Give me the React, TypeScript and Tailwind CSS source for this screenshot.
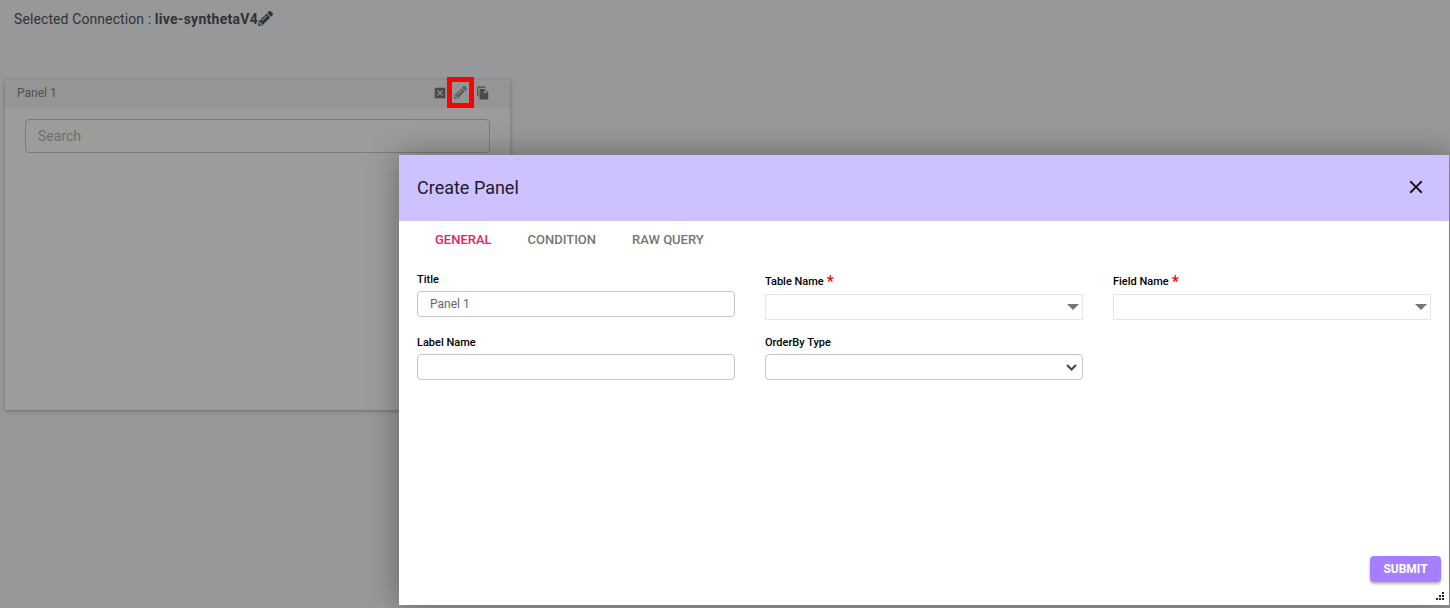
import { MdDisabledByDefault, MdFileCopy, MdClose } from 'react-icons/md';
import { FaPencilAlt } from 'react-icons/fa';

const TABS = ['GENERAL', 'CONDITION', 'RAW QUERY'];

function Label({ text, required }: { text: string; required?: boolean }) {
    return (
        <div className="h-[20px] flex items-center text-[11px] font-medium text-black leading-none">
            {text}
            {required && <span className="ml-[3px] mt-[2px] text-[16px] text-[#f00] leading-none">*</span>}
        </div>
    );
}

function TextBox({ value }: { value?: string }) {
    return (
        <div className="h-[26px] flex items-center pl-[12px] rounded-[4px] border border-[#c4c4c4] text-[12px] text-[#666]">
            {value}
        </div>
    );
}

function Caret() {
    return (
        <svg width="12" height="6" viewBox="0 0 12 6" fill="#757575">
            <path d="M0 0h12L6 6z" />
        </svg>
    );
}

function ComboBox() {
    return (
        <div className="h-[26px] mt-[3px] flex items-center justify-end pr-[3px] border border-[#e5e5e5]">
            <Caret />
        </div>
    );
}

export default function App() {
    return (
        <div className="relative w-[1450px] h-[608px] overflow-hidden bg-[#97989a] font-['Roboto',sans-serif]">
            {/* Page behind the backdrop */}
            <div className="pl-[14px] pt-[10px] h-[80px] text-[14px] leading-[18px] text-[#333] flex items-start tracking-[0.1px]">
                <span>Selected Connection :&nbsp;</span>
                <b className="font-bold tracking-[0.27px]">live-synthetaV4</b>
                <FaPencilAlt className="w-[15px] h-[15px] mt-[1px] text-[#333]" />
            </div>

            <div className="ml-[5px] w-[505px] h-[330px] bg-[#9c9c9b] shadow-[0_1px_4px_rgba(0,0,0,0.3)]">
                <div className="h-[28px] bg-[#959595] pl-[12px] pr-[20px] pb-[3px] flex items-center justify-between">
                    <span className="text-[12px] text-[#4f4f55]">Panel 1</span>
                    <div className="flex items-center">
                        <MdDisabledByDefault className="w-[14px] h-[14px] text-[#4a4a4a]" />
                        <div className="w-[27px] h-[31px] flex items-center justify-center border-[5px] border-[#f00]">
                            <FaPencilAlt className="w-[13px] h-[13px] text-[#5c5c5c]" />
                        </div>
                        <MdFileCopy className="ml-[2px] w-[14px] h-[14px] text-[#4a4a4a]" />
                    </div>
                </div>
                <div className="px-[20px] pt-[11px]">
                    <div className="h-[34px] flex items-center pl-[12px] rounded-[4px] border border-[#7c7c7c] text-[14px] text-[#6f6f6f]">
                        Search
                    </div>
                </div>
            </div>

            {/* Create Panel dialog */}
            <div className="absolute left-[399px] top-[155px] w-[1050px] h-[450px] flex flex-col bg-white shadow-[0_0_30px_rgba(0,0,0,0.35)]">
                <div className="h-[66px] bg-[#cdc2ff] pl-[18px] pr-[22px] pb-[2px] flex items-center justify-between">
                    <span className="text-[18px] text-[#1d1a2b]">Create Panel</span>
                    <MdClose className="w-[22px] h-[22px] text-[#111]" />
                </div>

                <div className="h-[37px] pl-[18px] flex items-center">
                    {TABS.map((tab, i) => (
                        <div
                            key={tab}
                            className={
                                i === 0
                                    ? 'px-[18px] text-[13px] font-medium text-[#e91e63]'
                                    : 'px-[18px] text-[13px] font-medium text-[#757575]'
                            }
                        >
                            {tab}
                        </div>
                    ))}
                </div>

                <div className="flex-1 relative px-[18px] pt-[13px]">
                    <div className="grid grid-cols-[318px_318px_318px] gap-x-[30px]">
                        <div>
                            <div className="h-[16px] flex items-center text-[11px] font-medium text-black leading-none">Title</div>
                            <div className="h-[4px]" />
                            <TextBox value="Panel 1" />
                        </div>
                        <div>
                            <Label text="Table Name" required />
                            <ComboBox />
                        </div>
                        <div>
                            <Label text="Field Name" required />
                            <ComboBox />
                        </div>
                        <div className="mt-[12px]">
                            <Label text="Label Name" />
                            <div className="pt-[2px]"><TextBox /></div>
                        </div>
                        <div className="mt-[12px]">
                            <Label text="OrderBy Type" />
                            <div className="h-[26px] mt-[2px] flex items-center justify-end pr-[5px] rounded-[4px] border border-[#c4c4c4]">
                                <svg width="11" height="7" viewBox="0 0 11 7" fill="none" stroke="#444" strokeWidth="2">
                                    <path d="M1 1l4.500 4.500L10 1" />
                                </svg>
                            </div>
                        </div>
                    </div>

                    <button className="absolute right-[8px] bottom-[23px] w-[71px] h-[26px] rounded-[4px] bg-[#a57fff] text-white text-[12px] font-bold shadow-[0_2px_3px_rgba(0,0,0,0.3)]">
                        SUBMIT
                    </button>
                    {/* resize grip */}
                    <svg className="absolute right-[4px] bottom-[4px]" width="10" height="10" viewBox="0 0 10 10" fill="#222">
                        <rect x="7" y="1" width="2" height="2" />
                        <rect x="4" y="4" width="2" height="2" />
                        <rect x="7" y="4" width="2" height="2" />
                        <rect x="1" y="7" width="2" height="2" />
                        <rect x="4" y="7" width="2" height="2" />
                        <rect x="7" y="7" width="2" height="2" />
                    </svg>
                </div>
            </div>
        </div>
    );
}
